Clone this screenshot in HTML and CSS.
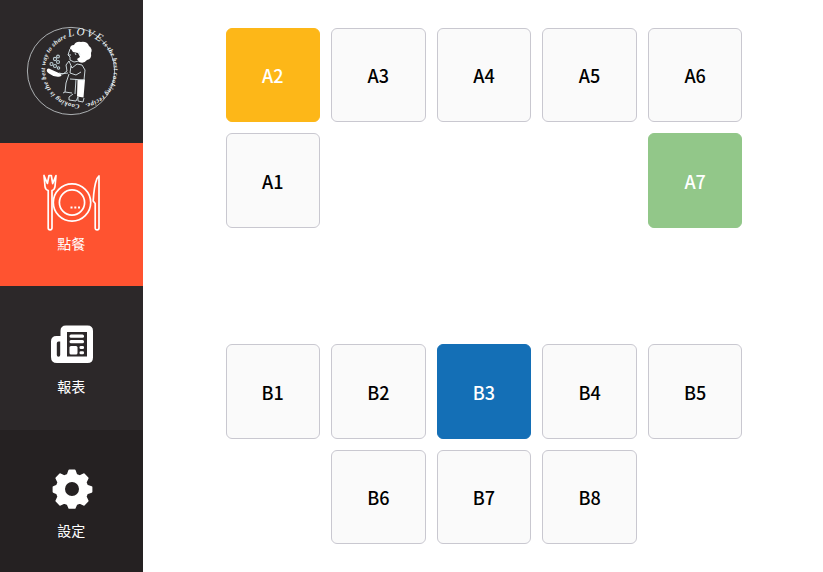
FILE: index.html
```html
<!DOCTYPE html>
<html lang="zh-Hant">
<head>
<meta charset="utf-8">
<title>點餐</title>
<link rel="stylesheet" href="styles.css">
</head>
<body>
<div class="app">
  <nav class="sidebar">
    <div class="brand">
      <svg class="logo" viewBox="0 0 102 100" width="102" height="100">
        <defs><path id="ring" d="M59.5 84.4A34.5 34.5 0 1 1 59.6 84.4"/></defs>
        <circle cx="51" cy="51" r="43.6" fill="none" stroke="#d5dcdf" stroke-width=".75"/>
        <g class="motto">
          <text><textPath href="#ring" startOffset="0" textLength="95">Cooking is the best way to share</textPath></text>
          <text class="love"><textPath href="#ring" startOffset="97" textLength="33">LOVE</textPath></text>
          <text><textPath href="#ring" startOffset="132.5" textLength="78">is the best cooking recipe.</textPath></text>
        </g>
        <path fill="#fff" d="M50 29q0-4 4-4 2-4 7-3 6-1 8 4 4 3 2 7 1 6-4 7-3 4-8 2l-2-3 3-2-2-4-5-1-2-3z"/>
        <path fill="#fff" d="M27 49.5q1-2 4 0l9 4q3 2 0 3-6 1-11-3-3-2-2-4zM57.500 60l7.500-.5-1.500 18-6.500-1z"/>
        <path fill="none" stroke="#dce8ec" stroke-width=".9" d="M50 29l-2 6 2 2v3l4 2 5-1M48 35h3M55 33l1 2M59 32l1 3M49 41l-3 4 1 6-4 3-4-1M49 41l3 7 5-4 5 1 3 5-1 10-14-1M51 46l-1 7 6 2 5-3M49 54l-3 9-1 9 7 1M56 59l-1 15M45 72l-2 1M53 74l-4 3v3l7 1 2-4M58 77v4l5 1 1-4M40 54l8-1"/>
        <g fill="none" stroke="#b9cbd1" stroke-width="1.1"><circle cx="31.500" cy="44" r="1.500"/><circle cx="35" cy="39" r="1.600"/><circle cx="38" cy="36.500" r="1.400"/><circle cx="38" cy="42" r="1.500"/><circle cx="35" cy="46" r="1.500"/><circle cx="38.500" cy="48" r="1.200"/></g>
      </svg>
    </div>
    <a class="item active">
      <svg class="icon" viewBox="0 0 60 60" width="60" height="60" fill="none" stroke="#fff" stroke-width="1.700" stroke-linejoin="round">
        <circle cx="31" cy="31.500" r="18.700"/><circle cx="31" cy="31.500" r="12.600"/>
        <path d="M3 4.500l1 11q.3 3 3.200 4V57q0 1.800 1.900 1.800T11 57V19.500q2.700-1 3-4l1-11-3.300 8-1.400-8H8L6.400 12.500z"/>
        <path d="M58 5v52q0 1.800-1.900 1.800T54.200 57V32.500l-2-2.500Q53 15 56 7.500z"/>
        <g fill="#fff" stroke="none"><path d="M29.500 35.500h2v2h-2zM33.300 35.500h2v2h-2zM37 35.500h2v2h-2z"/></g>
      </svg>
      <span>點餐</span>
    </a>
    <a class="item">
      <svg class="icon" viewBox="0 0 60 60" width="60" height="60">
        <path fill="#fff" fill-rule="evenodd" d="M25 11.500h21.500q5.500 0 5.500 5.500v26.500q0 5.500-5.500 5.500H16q-6 0-6-6V27.500q0-5.500 5.500-5.500h4v-5q0-5.500 5.500-5.500zM17.500 27.500q-1.700 0-1.700 1.700V41q0 1.700 1.700 1.700t1.700-1.700V27.500zM26 18v24.500h20V18z"/>
        <g fill="#fff"><rect x="28.500" y="20.500" width="14.500" height="3.200" rx="1.500"/><rect x="28.500" y="26" width="14.500" height="3.200" rx="1.500"/><rect x="28.500" y="32" width="8" height="8.500" rx="1.500"/><rect x="38.500" y="32" width="4.500" height="3" rx="1.300"/><rect x="38.500" y="37.300" width="4.500" height="3" rx="1.300"/></g>
      </svg>
      <span>報表</span>
    </a>
    <a class="item dark">
      <svg class="icon" viewBox="0 0 60 60" width="60" height="60">
        <path fill="#fff" stroke="#fff" stroke-width="2" stroke-linejoin="round" fill-rule="evenodd" d="M28.300 12.500h5.400l1.600 4.500 3.200 1.300 4.300-2 3.800 3.800-2 4.300 1.300 3.200 4.500 1.600v4.600l-4.500 1.600-1.300 3.200 2 4.300-3.800 3.800-4.300-2-3.200 1.300-1.600 3.800h-5.400l-1.600-3.800-3.200-1.300-4.300 2-3.800-3.800 2-4.300-1.300-3.200-3.500-1.600v-4.600l3.500-1.600 1.300-3.200-2-4.300 3.800-3.800 4.300 2 3.200-1.300zM31 23a8 8 0 1 0 0 16 8 8 0 1 0 0-16z"/>
      </svg>
      <span>設定</span>
    </a>
  </nav>
  <main class="floor">
    <section class="zone">
      <div class="seat yellow">A2</div><div class="seat">A3</div><div class="seat">A4</div><div class="seat">A5</div><div class="seat">A6</div>
      <div class="seat">A1</div><div class="seat green last">A7</div>
    </section>
    <section class="zone">
      <div class="seat">B1</div><div class="seat">B2</div><div class="seat blue">B3</div><div class="seat">B4</div><div class="seat">B5</div>
      <div class="seat second">B6</div><div class="seat">B7</div><div class="seat">B8</div>
    </section>
  </main>
</div>
</body>
</html>
```
FILE: styles.css
```css
* { box-sizing: border-box; }
body { margin: 0; background: #fff; font-family: "Noto Sans CJK TC", sans-serif; }
.app { display: flex; height: 572px; overflow: hidden; }
.sidebar { width: 142.500px; flex: none; background: #2c2829; display: flex; flex-direction: column; }
.brand { height: 142.500px; flex: none; padding: 20px 0 0 20px; }
.logo { display: block; }
.motto text { fill: #eef6f8; font: italic bold 6.500px "Liberation Serif", serif; }
.motto .love { font-size: 11px; font-weight: normal; }
.item { height: 143.500px; flex: none; display: flex; flex-direction: column; align-items: center; padding-top: 28px; color: #fff; font-size: 14px; line-height: 20px; }
.item span { margin-top: 2px; }
.icon { display: block; }
.active { background: #ff5330; }
.dark { background: #252122; }
.floor { padding: 27.500px 0 0 83px; }
.zone { display: grid; grid-template-columns: repeat(5, 94.500px); grid-auto-rows: 94.500px; gap: 11.100px; margin-bottom: 116.500px; }
.seat { display: flex; align-items: center; justify-content: center; border: 1px solid #c9c8d0; border-radius: 6px; background: #fafafa; color: #000; font-size: 18px; font-weight: 500; line-height: 26px; padding-top: 1px; }
.yellow { background: #fdb718; border-color: #fdb718; color: #fff; }
.green { background: #92c789; border-color: #92c789; color: #fff; }
.blue { background: #146fb6; border-color: #146fb6; color: #fff; }
.last { grid-column: 5; }
.second { grid-column: 2; }
```
